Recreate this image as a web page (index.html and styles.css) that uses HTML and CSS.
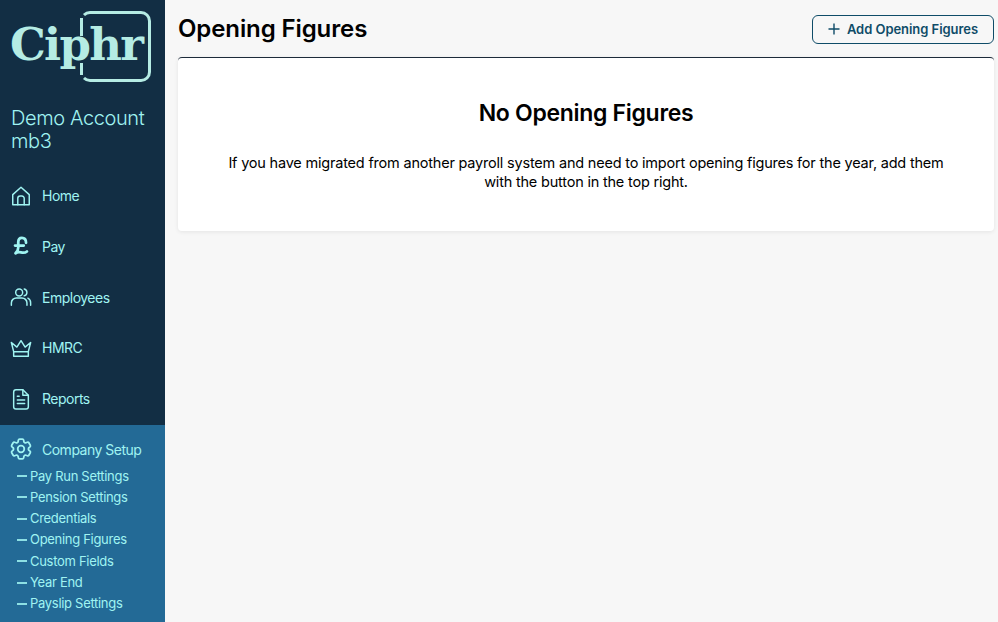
FILE: index.html
```html
<!DOCTYPE html>
<html lang="en">
<head>
    <meta charset="UTF-8">
    <title>Opening Figures</title>
    <link rel="stylesheet" href="styles.css">
</head>
<body>
    <aside class="sidebar">
        <div class="logo">
            <span class="logo-text">Ciphr</span>
            <span class="logo-box"></span>
        </div>
        <div class="account">Demo Account mb3</div>
        <nav class="nav">
            <a class="nav-item">
                <svg class="nav-icon" viewBox="0 0 24 24"><path d="M3 21.500V10.500L12 2.500l9 8v11z"/><path d="M8.500 21.500v-7a2.500 2.500 0 0 1 2.500-2.500h2a2.500 2.500 0 0 1 2.500 2.500v7"/></svg>
                <span>Home</span>
            </a>
            <a class="nav-item">
                <svg class="nav-icon" viewBox="0 0 24 24"><path class="thick" d="M17.500 8.500C17.500 5 15.500 3 13 3S9 5 9 8v5.500c0 2.500-1 4.500-3 6.500 2-1.500 4-1.500 6-1s4 1 6.500-1M5.500 11.500h9.500"/></svg>
                <span>Pay</span>
            </a>
            <a class="nav-item">
                <svg class="nav-icon" viewBox="0 0 24 24"><circle cx="10" cy="7" r="3.800"/><path d="M1.500 21v-2.500A5.500 5.500 0 0 1 7 13h6a5.500 5.500 0 0 1 5.500 5.500V21"/><path d="M15.500 3.300a3.800 3.800 0 0 1 0 7.400M19.500 13.300a5.500 5.500 0 0 1 3 5V21"/></svg>
                <span>Employees</span>
            </a>
            <a class="nav-item">
                <svg class="nav-icon" viewBox="0 0 24 24"><path d="M1.500 6l6 5L12 4l4.500 7 6-5-2.500 10H4z"/><path d="M4 16v5h16v-5"/></svg>
                <span>HMRC</span>
            </a>
            <a class="nav-item">
                <svg class="nav-icon" viewBox="0 0 24 24"><path d="M4 4.500a2.500 2.500 0 0 1 2.500-2.500H14l6 6v12.500a2.500 2.500 0 0 1-2.500 2.500h-11A2.500 2.500 0 0 1 4 20.500z"/><path d="M14 2v6h6M8 9h2M8 13h8M8 17h8"/></svg>
                <span>Reports</span>
            </a>
        </nav>
        <div class="setup">
            <a class="nav-item setup-head">
                <svg class="nav-icon" viewBox="2 2 20 20"><circle cx="12" cy="12" r="3"/><path d="M9.594 3.940c.09-.542.56-.94 1.110-.94h2.593c.55 0 1.020.398 1.110.94l.213 1.281c.063.374.313.686.645.870.074.040.147.083.22.127.325.196.72.257 1.075.124l1.217-.456a1.125 1.125 0 0 1 1.370.49l1.296 2.247a1.125 1.125 0 0 1-.26 1.431l-1.003.827c-.293.241-.438.613-.43.992a7.723 7.723 0 0 1 0 .255c-.008.378.137.75.43.991l1.004.827c.424.35.534.955.26 1.430l-1.298 2.247a1.125 1.125 0 0 1-1.369.491l-1.217-.456c-.355-.133-.75-.072-1.076.124a6.470 6.470 0 0 1-.22.128c-.331.183-.581.495-.644.869l-.213 1.281c-.09.543-.56.94-1.110.94h-2.594c-.55 0-1.019-.398-1.110-.94l-.213-1.281c-.062-.374-.312-.686-.644-.87a6.520 6.520 0 0 1-.22-.127c-.325-.196-.72-.257-1.076-.124l-1.217.456a1.125 1.125 0 0 1-1.369-.49l-1.297-2.247a1.125 1.125 0 0 1 .26-1.431l1.004-.827c.292-.24.437-.613.43-.991a6.932 6.932 0 0 1 0-.255c.007-.38-.138-.751-.43-.992l-1.004-.827a1.125 1.125 0 0 1-.26-1.430l1.297-2.247a1.125 1.125 0 0 1 1.370-.491l1.216.456c.356.133.751.072 1.076-.124.072-.044.146-.086.22-.128.332-.183.582-.495.644-.869l.214-1.280z"/></svg>
                <span>Company Setup</span>
            </a>
            <ul class="sub-nav">
                <li>Pay Run Settings</li>
                <li>Pension Settings</li>
                <li>Credentials</li>
                <li>Opening Figures</li>
                <li>Custom Fields</li>
                <li>Year End</li>
                <li>Payslip Settings</li>
            </ul>
        </div>
    </aside>

    <main class="content">
        <header class="top-bar">
            <h1>Opening Figures</h1>
            <button class="add-btn">
                <svg class="plus" viewBox="0 0 12 12"><path d="M6 .5v11M.5 6h11"/></svg>
                Add Opening Figures
            </button>
        </header>
        <section class="card">
            <h2>No Opening Figures</h2>
            <p>If you have migrated from another payroll system and need to import opening figures for the year, add them with the button in the top right.</p>
        </section>
    </main>
</body>
</html>
```

FILE: styles.css
```css
:root {
    --navy: #122e44;
    --setup-blue: #236a96;
    --mint: #b5ece4;
    --aqua: #a0f4f2;
    --page-bg: #f7f7f7;
    --btn-color: #0f4c68;
}

* {
    box-sizing: border-box;
}

html, body {
    height: 100%;
}

body {
    margin: 0;
    display: flex;
    height: 622px;
    overflow: hidden;
    background-color: var(--page-bg);
    font-family: 'Inter', 'Open Sans', sans-serif;
}

/* sidebar */
.sidebar {
    width: 165px;
    flex-shrink: 0;
    display: flex;
    flex-direction: column;
    background-color: var(--navy);
    color: var(--aqua);
}

.logo {
    position: relative;
    height: 93px;
    padding: 14px 0 0 10px;
}

.logo-text {
    font-family: 'DejaVu Serif', serif;
    font-weight: 700;
    font-size: 45px;
    line-height: 62px;
    letter-spacing: -1.7px;
    color: var(--mint);
}

.logo-box {
    position: absolute;
    left: 80px;
    top: 11px;
    width: 71px;
    height: 71px;
    border: 3px solid var(--mint);
    border-left-color: transparent;
    border-radius: 10px;
}

.logo-box::before {
    content: "";
    position: absolute;
    left: -3px;
    top: 4px;
    width: 3px;
    height: 18px;
    background-color: var(--mint);
}

.logo-box::after {
    content: "";
    position: absolute;
    left: -3px;
    bottom: 4px;
    width: 3px;
    height: 12px;
    background-color: var(--mint);
}

.account {
    padding: 14px 15px 0 11px;
    font-size: 20px;
    line-height: 23px;
    font-weight: 300;
    letter-spacing: -0.4px;
}

.nav {
    margin-top: 27.500px;
    display: flex;
    flex-direction: column;
    gap: 20.750px;
}

.nav-item {
    display: flex;
    align-items: center;
    gap: 10px;
    height: 30px;
    padding-left: 10px;
    font-size: 14px;
    letter-spacing: -0.5px;
}

.nav-icon {
    width: 22px;
    height: 22px;
    flex-shrink: 0;
    fill: none;
    stroke: var(--aqua);
    stroke-width: 1.6;
    stroke-linejoin: round;
    stroke-linecap: round;
}

.nav-icon .thick {
    stroke-width: 3;
}

.setup {
    flex: 1;
    margin-top: 11px;
    padding-top: 9.500px;
    background-color: var(--setup-blue);
}

.sub-nav {
    list-style: none;
    margin: 1.500px 0 0;
    padding: 0 0 0 17px;
    font-size: 13px;
    letter-spacing: -0.3px;
    line-height: 21.3px;
}

.sub-nav li {
    display: flex;
    align-items: center;
    gap: 3px;
}

.sub-nav li::before {
    content: "";
    width: 10px;
    height: 2px;
    background-color: var(--aqua);
    opacity: 0.85;
}

/* main */
.content {
    flex: 1;
    min-width: 0;
    padding: 15px 4px 0 13px;
}

.top-bar {
    display: flex;
    justify-content: space-between;
    align-items: center;
    height: 29px;
    margin-bottom: 13px;
}

h1 {
    margin: 0;
    padding-bottom: 2px;
    font-size: 24px;
    font-weight: 600;
    letter-spacing: -0.1px;
    color: #000000;
}

.add-btn {
    display: flex;
    align-items: center;
    justify-content: center;
    gap: 7px;
    width: 182px;
    height: 29px;
    padding: 0 0 2px;
    background-color: transparent;
    border: 1px solid var(--btn-color);
    border-radius: 6px;
    color: var(--btn-color);
    font-family: inherit;
    font-size: 13px;
    font-weight: 600;
    letter-spacing: -0.05px;
}

.plus {
    width: 12px;
    height: 12px;
    fill: none;
    stroke: var(--btn-color);
    stroke-width: 1.4;
}

.card {
    height: 174px;
    padding: 41px 40px 0;
    background-color: #ffffff;
    border-top: 1px solid #1d2b3a;
    border-radius: 4px;
    box-shadow: 0 1px 4px rgba(0, 0, 0, 0.08);
    text-align: center;
    color: #000000;
}

h2 {
    margin: 0 0 25px;
    font-size: 23px;
    line-height: 29px;
    font-weight: 600;
    letter-spacing: -0.3px;
}

.card p {
    margin: 0;
    font-size: 14.500px;
    line-height: 19px;
    letter-spacing: -0.2px;
}
```
